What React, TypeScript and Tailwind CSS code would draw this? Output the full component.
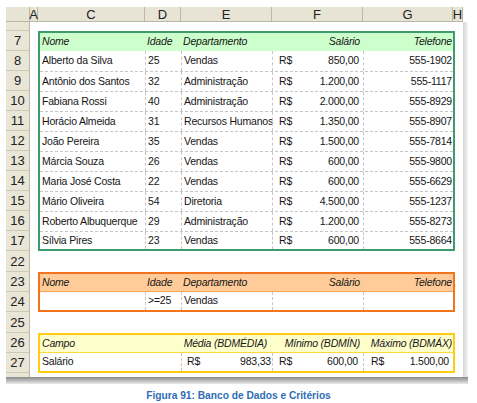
const people: [string, string, string, string, string][] = [
  ['Alberto da Silva', '25', 'Vendas', '850,00', '555-1902'],
  ['Antônio dos Santos', '32', 'Administração', '1.200,00', '555-1117'],
  ['Fabiana Rossi', '40', 'Administração', '2.000,00', '555-8929'],
  ['Horácio Almeida', '31', 'Recursos Humanos', '1.350,00', '555-8907'],
  ['João Pereira', '35', 'Vendas', '1.500,00', '555-7814'],
  ['Márcia Souza', '26', 'Vendas', '600,00', '555-9800'],
  ['Maria José Costa', '22', 'Vendas', '600,00', '555-6629'],
  ['Mário Oliveira', '54', 'Diretoria', '4.500,00', '555-1237'],
  ['Roberto Albuquerque', '29', 'Administração', '1.200,00', '555-8273'],
  ['Sílvia Pires', '23', 'Vendas', '600,00', '555-8664'],
];

const rowHeads = [
  { n: '', h: 'h-[9px]' },
  { n: '7', h: 'h-[20px]' },
  { n: '8', h: 'h-[20px]' },
  { n: '9', h: 'h-[20px]' },
  { n: '10', h: 'h-[20px]' },
  { n: '11', h: 'h-[20px]' },
  { n: '12', h: 'h-[20px]' },
  { n: '13', h: 'h-[20px]' },
  { n: '14', h: 'h-[20px]' },
  { n: '15', h: 'h-[20px]' },
  { n: '16', h: 'h-[20px]' },
  { n: '17', h: 'h-[20px]' },
  { n: '22', h: 'h-[21px]' },
  { n: '23', h: 'h-[20px]' },
  { n: '24', h: 'h-[20px]' },
  { n: '25', h: 'h-[21px]' },
  { n: '26', h: 'h-[20px]' },
  { n: '27', h: 'h-[20px]' },
];

const dash = 'border-l border-dashed border-[#c6c6c6]';

function ColHeader() {
  const cols = [
    { l: '', w: 'w-[24px]' },
    { l: 'A', w: 'w-[8px]' },
    { l: 'C', w: 'w-[107px]' },
    { l: 'D', w: 'w-[36px]' },
    { l: 'E', w: 'w-[91px]' },
    { l: 'F', w: 'w-[91px]' },
    { l: 'G', w: 'w-[90px]' },
    { l: 'H', w: 'w-[10px]' },
  ];
  return (
    <div className="flex h-[15px] bg-[#e7e4d6] border-b border-[#bcb8a6]">
      {cols.map((c, i) => (
        <div
          key={i}
          className={`${c.w} flex items-center justify-center border-r border-[#bcb8a6] text-[13px] leading-none tracking-normal text-[#222]`}
        >
          {c.l}
        </div>
      ))}
    </div>
  );
}

function TableHeader({ fill, line }: { fill: string; line: string }) {
  return (
    <div className={`flex h-[18px] items-center italic ${fill} ${line}`}>
      <div className="w-[105px] pl-[2px]">Nome</div>
      <div className="w-[36px] pl-[2px]">Idade</div>
      <div className="w-[91px] pl-[2px]">Departamento</div>
      <div className="w-[91px] pr-[3px] text-right">Salário</div>
      <div className="w-[90px] pr-[1px] text-right">Telefone</div>
    </div>
  );
}

export default function App() {
  return (
    <div className="w-[477px] h-[403px] bg-white pt-[7px] font-['Liberation_Sans',Arial,sans-serif] text-[10.5px] tracking-[-0.2px] text-[#151515] whitespace-nowrap">
      <div className="ml-[6px] w-[462px]">
        <div className="w-[457px]">
          <ColHeader />
        </div>
        <div className="flex">
          {/* row numbers */}
          <div className="w-[24px] flex flex-col bg-[#e9e6d8] border-r border-[#bcb8a6]">
            {rowHeads.map((r, i) => (
              <div
                key={i}
                className={`${r.h} flex items-center justify-center border-b border-[#cdc9b7] text-[13px] leading-none tracking-normal text-[#222]`}
              >
                {r.n}
              </div>
            ))}
            <div className="h-[4px]" />
          </div>

          {/* sheet */}
          <div className="w-[433px] flex flex-col pl-[8px] pt-[9px]">
            <div className="w-[417px] h-[220px] border-2 border-[#3d9b6d] flex flex-col">
              <TableHeader fill="bg-[#ccffcc]" line="" />
              {people.map((p, i) => (
                <div
                  key={p[0]}
                  className={`flex items-center ${i === 9 ? 'h-[18px]' : 'h-[20px]'} ${
                    i === 0 ? '' : 'border-t border-dashed border-[#c6c6c6]'
                  }`}
                >
                  <div className="w-[105px] h-full pl-[2px] flex items-center">{p[0]}</div>
                  <div className={`w-[36px] h-full pl-[2px] flex items-center ${dash}`}>{p[1]}</div>
                  <div className={`w-[91px] h-full pl-[2px] flex items-center ${dash}`}>{p[2]}</div>
                  <div className={`w-[91px] h-full pl-[6px] pr-[4px] flex items-center justify-between ${dash}`}>
                    <span>R$</span>
                    <span>{p[3]}</span>
                  </div>
                  <div className={`w-[90px] h-full pr-[1px] flex items-center justify-end ${dash}`}>{p[4]}</div>
                </div>
              ))}
            </div>

            <div className="h-[21px]" />

            <div className="w-[417px] h-[40px] border-2 border-[#f4731f] flex flex-col">
              <TableHeader fill="bg-[#ffcc99]" line="border-b border-[#f7a05c]" />
              <div className="flex h-[18px]">
                <div className="w-[105px]" />
                <div className={`w-[36px] pl-[2px] flex items-center ${dash}`}>&gt;=25</div>
                <div className={`w-[91px] pl-[2px] flex items-center ${dash}`}>Vendas</div>
                <div className={`w-[91px] ${dash}`} />
                <div className={`w-[90px] ${dash}`} />
              </div>
            </div>

            <div className="h-[21px]" />

            <div className="w-[417px] h-[40px] border-2 border-[#ffcc11] flex flex-col">
              <div className="flex h-[18px] items-center italic bg-[#ffffcc] border-b border-[#ffd83a]">
                <div className="w-[141px] pl-[2px]">Campo</div>
                <div className="w-[91px] pr-[5px] text-right">Média (BDMÉDIA)</div>
                <div className="w-[91px] pr-[3px] text-right">Mínimo (BDMÍN)</div>
                <div className="w-[90px] pr-[1px] text-right">Máximo (BDMÁX)</div>
              </div>
              <div className="flex h-[18px]">
                <div className="w-[141px] pl-[2px] flex items-center">Salário</div>
                <div className={`w-[91px] pl-[5px] pr-[1px] flex items-center justify-between ${dash}`}>
                  <span>R$</span>
                  <span>983,33</span>
                </div>
                <div className={`w-[91px] pl-[6px] pr-[5px] flex items-center justify-between ${dash}`}>
                  <span>R$</span>
                  <span>600,00</span>
                </div>
                <div className={`w-[90px] pl-[7px] pr-[4px] flex items-center justify-between ${dash}`}>
                  <span>R$</span>
                  <span>1.500,00</span>
                </div>
              </div>
            </div>
          </div>

          {/* right edge shadow */}
          <div className="w-[5px] bg-gradient-to-r from-[#d4d4d4] to-[#f4f4f4]" />
        </div>

        {/* bottom shadow */}
        <div className="w-[462px] h-[7px] bg-gradient-to-b from-[#8c8c8c] via-[#b8b8b8] to-[#ececec]" />
      </div>

      <div className="mt-[4px] text-center font-bold text-[10.2px] tracking-normal text-[#2f6db4]">
        Figura 91: Banco de Dados e Critérios
      </div>
    </div>
  );
}
